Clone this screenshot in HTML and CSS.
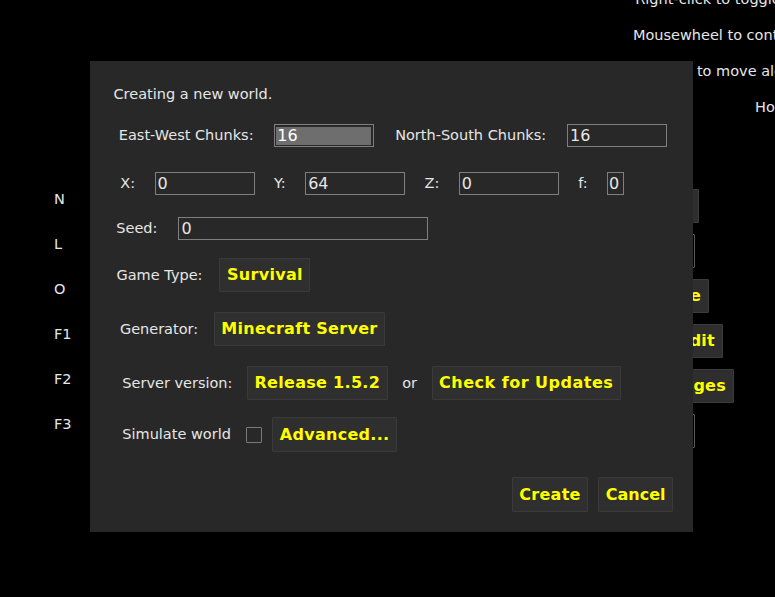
FILE: index.html
```html
<!DOCTYPE html>
<html>
<head>
<meta charset="utf-8">
<title>Create New World</title>
<link rel="stylesheet" href="styles.css">
</head>
<body>
<div class="screen">
  <div class="help">
    <div class="help-line">Right-click to toggle camera control</div>
    <div class="help-line">Mousewheel to control tool distance</div>
    <div class="help-line">Hold SHIFT to move along a major axis</div>
    <div class="help-line">Hold ALT for details</div>
  </div>

  <div class="menu">
    <div class="menu-key">N</div><div class="menu-btn mw-1"></div>
    <div class="menu-key">L</div><div class="menu-btn menu-btn-plain mw-2"></div>
    <div class="menu-key">O</div><div class="menu-btn mw-3">Save</div>
    <div class="menu-key">F1</div><div class="menu-btn mw-4">Reddit</div>
    <div class="menu-key">F2</div><div class="menu-btn mw-5">Changes</div>
    <div class="menu-key">F3</div><div class="menu-btn menu-btn-plain mw-6"></div>
  </div>

  <div class="dialog">
    <div class="title">Creating a new world.</div>

    <div class="row row-chunks">
      <div class="label">East-West Chunks:</div>
      <div class="field field-w100 field-focus"><span class="field-sel">16</span></div>
      <div class="label">North-South Chunks:</div>
      <div class="field field-w100">16</div>
    </div>

    <div class="row row-coords">
      <div class="label">X:</div>
      <div class="field field-w100">0</div>
      <div class="label">Y:</div>
      <div class="field field-w100">64</div>
      <div class="label">Z:</div>
      <div class="field field-w100">0</div>
      <div class="label">f:</div>
      <div class="field field-w17">0</div>
    </div>

    <div class="row row-seed">
      <div class="label">Seed:</div>
      <div class="field field-w250">0</div>
    </div>

    <div class="row row-gametype">
      <div class="label">Game Type:</div>
      <div class="btn">Survival</div>
    </div>

    <div class="row row-generator">
      <div class="label">Generator:</div>
      <div class="btn">Minecraft Server</div>
    </div>

    <div class="row row-version">
      <div class="label">Server version:</div>
      <div class="btn">Release 1.5.2</div>
      <div class="label">or</div>
      <div class="btn btn-wide">Check for Updates</div>
    </div>

    <div class="row row-simulate">
      <div class="label">Simulate world</div>
      <div class="check"></div>
      <div class="btn btn-advanced">Advanced...</div>
    </div>

    <div class="row row-actions">
      <div class="btn">Create</div>
      <div class="btn btn-cancel">Cancel</div>
    </div>
  </div>
</div>
</body>
</html>
```
FILE: styles.css
```css
* {
  box-sizing: border-box;
}

html,
body {
  margin: 0;
  padding: 0;
  background: #000;
}

body {
  font-family: "DejaVu Sans", "Noto Sans", sans-serif;
  font-size: 14.5px;
  color: #e6e6e6;
}

.screen {
  position: relative;
  width: 775px;
  height: 597px;
  overflow: hidden;
  background: #000;
}

/* help text, top right, right-aligned beyond the window edge */
.help {
  display: flex;
  flex-direction: column;
  gap: 19px;
  margin-top: -9.5px;
  margin-right: -120px;
  text-align: right;
}

.help-line {
  line-height: 17px;
  white-space: nowrap;
}

/* main menu behind the dialog */
.menu {
  display: grid;
  grid-template-columns: 420px auto;
  grid-auto-rows: 34px;
  row-gap: 11px;
  margin-top: 73.5px;
  justify-content: start;
}

.menu-key {
  padding-left: 54px;
  padding-top: 2px;
  line-height: 17px;
}

.menu-btn {
  height: 34px;
  border: 1px solid #3b3b3b;
  background: #2e2e2e;
  color: #ffff00;
  font-weight: bold;
  font-size: 16px;
  letter-spacing: 0.25px;
  text-align: right;
  padding-right: 7px;
  line-height: 32px;
  white-space: nowrap;
  overflow: hidden;
  border-radius: 1px;
}

.menu-btn-plain {
  border-color: #5a5a5a;
  background: #000;
}

.mw-1 { width: 279px; }
.mw-2 { width: 275px; }
.mw-3 { width: 289px; }
.mw-4 { width: 303px; }
.mw-5 { width: 314px; }
.mw-6 { width: 275px; }

/* modal dialog */
.dialog {
  position: absolute;
  left: 90px;
  top: 61px;
  width: 603px;
  height: 471px;
  background: #282828;
  display: flex;
  flex-direction: column;
  padding-top: 25px;
}

.title {
  line-height: 17px;
  margin-left: 23.5px;
  white-space: nowrap;
}

.row {
  display: flex;
  align-items: center;
}

.label {
  line-height: 17px;
  white-space: nowrap;
}

.row-chunks {
  margin-top: 21px;
  margin-left: 28.8px;
  gap: 20.8px;
  height: 23px;
}

.row-coords {
  margin-top: 25px;
  margin-left: 30.3px;
  gap: 19.4px;
  height: 23px;
}

.row-seed {
  margin-top: 22px;
  margin-left: 26.3px;
  gap: 21px;
  height: 23px;
}

.row-gametype {
  margin-top: 18px;
  margin-left: 26.5px;
  gap: 17px;
  height: 34px;
}

.row-generator {
  margin-top: 20px;
  margin-left: 29.9px;
  gap: 15.6px;
  height: 34px;
}

.row-version {
  margin-top: 20px;
  margin-left: 32.3px;
  gap: 14.5px;
  height: 34px;
}

.row-simulate {
  margin-top: 17px;
  margin-left: 32.3px;
  gap: 15px;
  height: 35px;
}

.row-actions {
  margin-top: 25px;
  justify-content: flex-end;
  padding-right: 20px;
  gap: 10px;
  height: 35px;
}

/* text fields */
.field {
  height: 23px;
  border: 1px solid #7f7f7f;
  padding: 0 2px;
  font-size: 16px;
  line-height: 21px;
  color: #e6e6e6;
  white-space: nowrap;
  overflow: hidden;
}

.field-w100 { width: 100px; }
.field-w250 { width: 250px; }
.field-w17 {
  width: 17px;
  padding: 0 1px;
}

.field-focus {
  padding: 2px 2px 1px 1px;
}

.field-sel {
  display: block;
  height: 18px;
  line-height: 18px;
  background: #6e6e6e;
  padding-left: 1px;
  color: #fff;
}

/* checkbox */
.check {
  width: 16px;
  height: 16px;
  border: 1px solid #7a7a7a;
  border-radius: 1px;
}

.btn-advanced {
  margin-left: -4.7px;
}

/* yellow buttons */
.btn {
  height: 34px;
  border: 1px solid #3a3a3a;
  background: #2f2f2f;
  color: #ffff00;
  font-weight: bold;
  font-size: 16px;
  letter-spacing: 0.3px;
  padding: 0 6.5px;
  line-height: 32px;
  white-space: nowrap;
  border-radius: 1px;
}

.btn-wide {
  letter-spacing: 0.5px;
}

.btn-cancel {
  letter-spacing: 0;
}

.row-actions .btn,
.row-simulate .btn {
  height: 35px;
  line-height: 33px;
}
```
